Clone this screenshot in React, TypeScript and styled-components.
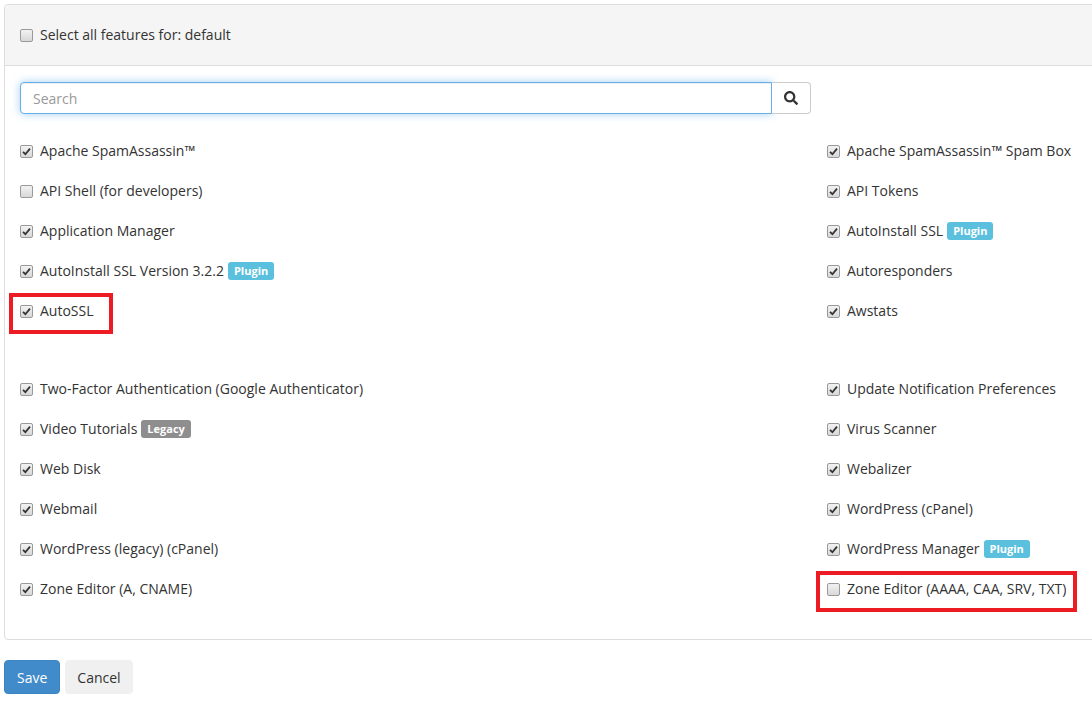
import React from 'react'
import styled, { createGlobalStyle, css } from 'styled-components'
import { FaSearch } from 'react-icons/fa'

const Global = createGlobalStyle`
  html, body {
    margin: 0;
    padding: 0;
    overflow: hidden;
    background: #fff;
  }
  body {
    font-family: 'Open Sans', 'Liberation Sans', sans-serif;
    font-size: 14px;
    color: #333;
  }
`

const Page = styled.div`
  padding: 4px 0 0 4px;
  width: 1700px;
`

const Panel = styled.div`
  border: 1px solid #ddd;
  border-radius: 4px;
  background: #fff;
`

const PanelHeader = styled.div`
  height: 60px;
  background: #f5f5f5;
  border-bottom: 1px solid #ddd;
  border-radius: 4px 4px 0 0;
  padding: 0 15px;
  display: flex;
  align-items: center;
`

const PanelBody = styled.div`
  padding: 16px 15px 30px;
`

const SearchRow = styled.div`
  display: flex;
  width: 791px;
  height: 32px;
  margin-bottom: 17px;
`

const SearchInput = styled.input`
  flex: 1;
  box-sizing: border-box;
  height: 32px;
  border: 1px solid #66afe9;
  border-radius: 4px 0 0 4px;
  padding: 0 12px;
  font: inherit;
  color: #555;
  outline: none;
  box-shadow: inset 0 1px 1px rgba(0, 0, 0, 0.075), 0 0 8px rgba(102, 175, 233, 0.6);
  &::placeholder {
    color: #999;
  }
`

const SearchButton = styled.button`
  width: 39px;
  height: 32px;
  box-sizing: border-box;
  border: 1px solid #ccc;
  border-left: none;
  border-radius: 0 4px 4px 0;
  background: #fff;
  color: #333;
  display: flex;
  align-items: center;
  justify-content: center;
  padding: 0;
`

const Columns = styled.div`
  display: grid;
  grid-template-columns: 807px 807px;
`

const Column = styled.div`
  display: flex;
  flex-direction: column;
`

const Gap = styled.div`
  height: 38px;
`

// $mark = how far the red box reaches past the label on the right
const Item = styled.div<{ $mark?: number }>`
  height: 40px;
  display: flex;
  align-items: center;
  position: relative;
  width: max-content;
  ${(p) =>
    p.$mark !== undefined &&
    css`
      &::after {
        content: '';
        position: absolute;
        top: 2px;
        bottom: -3px;
        left: -11px;
        right: -${p.$mark}px;
        border: 4px solid #ed1c24;
      }
    `}
`

const Box = styled.span`
  width: 13px;
  height: 13px;
  box-sizing: border-box;
  border: 1px solid #999;
  border-radius: 2px;
  background: linear-gradient(#f2f2f2, #d8d8d8);
  display: inline-flex;
  align-items: center;
  justify-content: center;
  margin-right: 7px;
  flex-shrink: 0;
`

const Label = styled.span`
  line-height: 20px;
  white-space: nowrap;
`

const Badge = styled.span<{ $kind: 'plugin' | 'legacy' }>`
  display: inline-block;
  margin-left: 4px;
  padding: 0 6px;
  height: 18px;
  line-height: 18px;
  border-radius: 3px;
  font-size: 11px;
  font-weight: 700;
  color: #fff;
  vertical-align: 1px;
  background: ${(p) => (p.$kind === 'plugin' ? '#5bc0de' : '#8e8e8e')};
`

const Footer = styled.div`
  display: flex;
  gap: 5px;
  margin-top: 20px;
`

const Btn = styled.button<{ $primary?: boolean }>`
  height: 34px;
  padding: 0 ${(p) => (p.$primary ? 12 : 11)}px;
  font: inherit;
  border-radius: 4px;
  border: 1px solid ${(p) => (p.$primary ? '#3a84c4' : '#f0f0f0')};
  background: ${(p) => (p.$primary ? '#428bca' : '#f0f0f0')};
  color: ${(p) => (p.$primary ? '#fff' : '#333')};
`

const Check = ({ on }: { on: boolean }) => (
  <Box>
    {on && (
      <svg width="9" height="9" viewBox="0 0 9 9">
        <path d="M1 4.8 L3.4 7.2 L8 1.6" fill="none" stroke="#333" strokeWidth="1.8" />
      </svg>
    )}
  </Box>
)

type Feature = {
  name: string
  on: boolean
  badge?: 'plugin' | 'legacy'
  mark?: number
}

const left1: Feature[] = [
  { name: 'Apache SpamAssassin™', on: true },
  { name: 'API Shell (for developers)', on: false },
  { name: 'Application Manager', on: true },
  { name: 'AutoInstall SSL Version 3.2.2', on: true, badge: 'plugin' },
  { name: 'AutoSSL', on: true, mark: 19 },
]
const left2: Feature[] = [
  { name: 'Two-Factor Authentication (Google Authenticator)', on: true },
  { name: 'Video Tutorials', on: true, badge: 'legacy' },
  { name: 'Web Disk', on: true },
  { name: 'Webmail', on: true },
  { name: 'WordPress (legacy) (cPanel)', on: true },
  { name: 'Zone Editor (A, CNAME)', on: true },
]
const right1: Feature[] = [
  { name: 'Apache SpamAssassin™ Spam Box', on: true },
  { name: 'API Tokens', on: true },
  { name: 'AutoInstall SSL', on: true, badge: 'plugin' },
  { name: 'Autoresponders', on: true },
  { name: 'Awstats', on: true },
]
const right2: Feature[] = [
  { name: 'Update Notification Preferences', on: true },
  { name: 'Virus Scanner', on: true },
  { name: 'Webalizer', on: true },
  { name: 'WordPress (cPanel)', on: true },
  { name: 'WordPress Manager', on: true, badge: 'plugin' },
  { name: 'Zone Editor (AAAA, CAA, SRV, TXT)', on: false, mark: 11 },
]

const FeatureRow = ({ f }: { f: Feature }) => (
  <Item $mark={f.mark}>
    <Check on={f.on} />
    <Label>
      {f.name}
      {f.badge && <Badge $kind={f.badge}>{f.badge === 'plugin' ? 'Plugin' : 'Legacy'}</Badge>}
    </Label>
  </Item>
)

const FeatureColumn = ({ top, bottom }: { top: Feature[]; bottom: Feature[] }) => (
  <Column>
    {top.map((f) => (
      <FeatureRow key={f.name} f={f} />
    ))}
    <Gap />
    {bottom.map((f) => (
      <FeatureRow key={f.name} f={f} />
    ))}
  </Column>
)

export default function App() {
  return (
    <>
      <Global />
      <Page>
        <Panel>
          <PanelHeader>
            <Check on={false} />
            <Label>Select all features for: default</Label>
          </PanelHeader>
          <PanelBody>
            <SearchRow>
              <SearchInput placeholder="Search" />
              <SearchButton>
                <FaSearch size={14} />
              </SearchButton>
            </SearchRow>
            <Columns>
              <FeatureColumn top={left1} bottom={left2} />
              <FeatureColumn top={right1} bottom={right2} />
            </Columns>
          </PanelBody>
        </Panel>
        <Footer>
          <Btn $primary>Save</Btn>
          <Btn>Cancel</Btn>
        </Footer>
      </Page>
    </>
  )
}
